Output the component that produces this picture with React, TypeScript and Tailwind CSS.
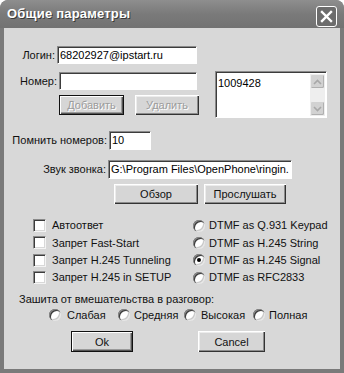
import React from 'react';

const sunken =
  'bg-white border border-t-[#8a8a8a] border-l-[#8a8a8a] border-b-white border-r-white shadow-[inset_1px_1px_0_#3c3c3c]';

const Field = ({ value, w }: { value: string; w: string }) => (
  <div className={`${sunken} ${w} h-full flex items-center pl-[2px] text-black overflow-hidden whitespace-nowrap`}>
    {value}
  </div>
);

const Btn = ({
  label,
  w,
  h = 'h-[20px]',
  isDefault = false,
  disabled = false,
}: {
  label: string;
  w: string;
  h?: string;
  isDefault?: boolean;
  disabled?: boolean;
}) => (
  <div
    className={`${w} ${h} flex items-center justify-center bg-[#d6d6d6] ${
      isDefault
        ? 'border border-[#111] shadow-[inset_1px_1px_0_#fff,inset_-1px_-1px_0_#555,inset_-2px_-2px_0_#9a9a9a]'
        : 'shadow-[inset_1px_1px_0_#fff,inset_-1px_-1px_0_#333,inset_-2px_-2px_0_#8c8c8c,inset_2px_2px_0_#ececec]'
    } ${disabled ? 'text-[#9c9c9c] [text-shadow:1px_1px_0_#fff]' : 'text-[#111]'}`}
  >
    {label}
  </div>
);

const Check = ({ label }: { label: string }) => (
  <div className="flex items-center h-[17.3px]">
    <div className="w-[13px] h-[13px] bg-white border border-t-[#8a8a8a] border-l-[#8a8a8a] border-b-[#f4f4f4] border-r-[#f4f4f4] shadow-[inset_1px_1px_0_#3c3c3c,inset_-1px_-1px_0_#d8d8d8]" />
    <span className="ml-[6px]">{label}</span>
  </div>
);

const Radio = ({ label, checked = false, gap = 'ml-[4px]' }: { label: string; checked?: boolean; gap?: string }) => (
  <div className="flex items-center h-[17.3px]">
    <div className="w-[12px] h-[12px] rounded-full bg-white flex items-center justify-center shadow-[inset_1px_1px_0_#8a8a8a,inset_2px_2px_0_#3c3c3c,inset_-1px_-1px_0_#e8e8e8,inset_-2px_-2px_0_#c8c8c8]">
      {checked && <div className="w-[4px] h-[4px] rounded-full bg-black" />}
    </div>
    <span className={gap}>{label}</span>
  </div>
);

const ScrollBtn = ({ up }: { up: boolean }) => (
  <div className="w-[15px] h-[15px] bg-[#d2d2d2] rounded-[2px] border border-[#eeeeee] shadow-[inset_-1px_-1px_0_#b0b0b0] flex items-center justify-center">
    <svg width="9" height="6" viewBox="0 0 9 6">
      <path
        d={up ? 'M1 5 L4.5 1.5 L8 5' : 'M1 1 L4.5 4.5 L8 1'}
        fill="none"
        stroke="#a8a8a8"
        strokeWidth="1.6"
      />
    </svg>
  </div>
);

export default function App() {
  return (
    <div className="w-[344px] h-[373px] bg-[#7a7a7a] rounded-t-[8px] flex flex-col px-[4px] pb-[4px] font-['Liberation_Sans',Arial,sans-serif] text-[11px] text-[#111] overflow-hidden">
      {/* title bar */}
      <div className="h-[28px] flex items-center justify-between bg-gradient-to-b from-[#8e8e8e] via-[#7a7a7a] to-[#727272] -mx-[4px] px-[7px] rounded-t-[8px]">
        <span className="text-white font-bold text-[13px] tracking-[0.2px] [text-shadow:1px_1px_0_#3a3a3a]">
          Общие параметры
        </span>
        <div className="w-[21px] h-[21px] mt-[4px] rounded-[3px] border border-white bg-[#6c6c6c] flex items-center justify-center">
          <svg width="13" height="13" viewBox="0 0 13 13">
            <path d="M2 2 L11 11 M11 2 L2 11" stroke="#fff" strokeWidth="2.4" strokeLinecap="square" />
          </svg>
        </div>
      </div>

      {/* body */}
      <div className="flex-1 bg-[#d8d8d8]">
        <div className="mt-[18px] flex h-[18px] items-center">
          <span className="w-[53px] text-right pr-[2px]">Логин:</span>
          <Field value="68202927@ipstart.ru" w="w-[140px]" />
        </div>

        <div className="flex mt-[7px]">
          <div className="flex flex-col">
            <div className="flex h-[18px] items-center mt-[1px]">
              <span className="w-[55px] text-right pr-[2px]">Номер:</span>
              <Field value="" w="w-[138px]" />
            </div>
            <div className="flex mt-[5px] pl-[55px]">
              <Btn label="Добавить" w="w-[65px]" isDefault disabled />
              <div className="ml-[11px]">
                <Btn label="Удалить" w="w-[64px]" disabled />
              </div>
            </div>
          </div>
          <div className={`ml-[16px] w-[112px] h-[47px] ${sunken} flex justify-between`}>
            <span className="pl-[2px] pt-[3px] text-black">1009428</span>
            <div className="flex flex-col justify-between w-[15px] mr-[1px] mt-[2px] mb-[1px] bg-[#eeeeee]">
              <ScrollBtn up />
              <ScrollBtn up={false} />
            </div>
          </div>
        </div>

        <div className="flex h-[19px] items-center mt-[13px]">
          <span className="w-[105px] text-right pr-[2px] whitespace-nowrap">Помнить номеров:</span>
          <Field value="10" w="w-[42px]" />
        </div>

        <div className="flex h-[19px] items-center mt-[10px]">
          <span className="w-[104px] text-right pr-[2px] whitespace-nowrap">Звук звонка:</span>
          <Field value="G:\Program Files\OpenPhone\ringin." w="w-[184px]" />
        </div>

        <div className="flex mt-[5px] pl-[110px] gap-[6px]">
          <Btn label="Обзор" w="w-[84px]" />
          <Btn label="Прослушать" w="w-[82px]" />
        </div>

        <div className="flex mt-[13px] pl-[29px]">
          <div className="w-[160px] flex flex-col">
            <Check label="Автоответ" />
            <Check label="Запрет Fast-Start" />
            <Check label="Запрет H.245 Tunneling" />
            <Check label="Запрет H.245 in SETUP" />
          </div>
          <div className="flex flex-col">
            <Radio label="DTMF as Q.931 Keypad" />
            <Radio label="DTMF as H.245 String" />
            <Radio label="DTMF as H.245 Signal" checked />
            <Radio label="DTMF as RFC2833" />
          </div>
        </div>

        <div className="mt-[6px] pl-[15px] h-[14px] leading-[14px]">Зашита от вмешательства в разговор:</div>

        <div className="flex pl-[45px]">
          <div className="w-[69px]"><Radio label="Слабая" gap="ml-[6px]" /></div>
          <div className="w-[66px]"><Radio label="Средняя" gap="ml-[4px]" /></div>
          <div className="w-[69px]"><Radio label="Высокая" gap="ml-[5px]" /></div>
          <Radio label="Полная" gap="ml-[4px]" />
        </div>

        <div className="flex mt-[8px] pl-[67px]">
          <Btn label="Ok" w="w-[62px]" h="h-[21px]" isDefault />
          <div className="ml-[65px]">
            <Btn label="Cancel" w="w-[67px]" h="h-[21px]" />
          </div>
        </div>
      </div>
    </div>
  );
}
